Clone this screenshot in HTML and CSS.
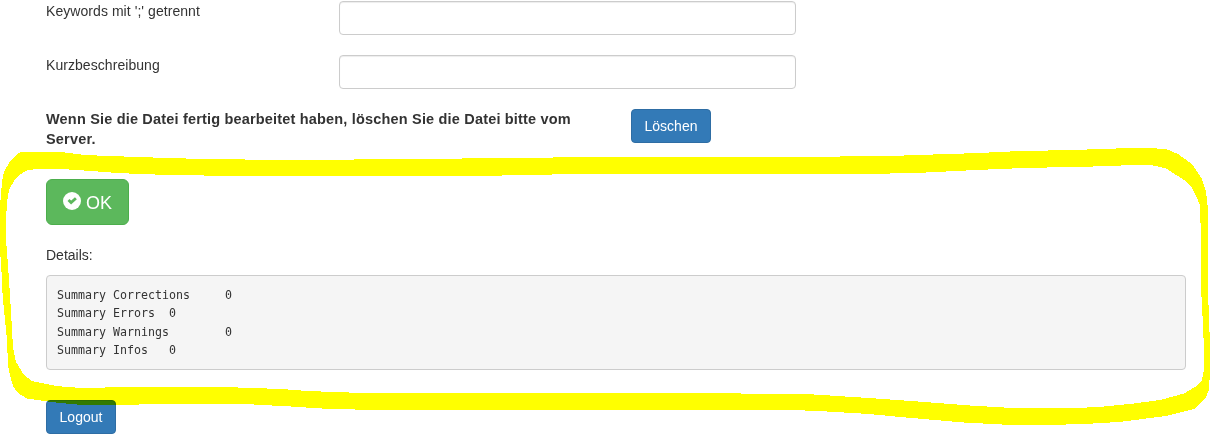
FILE: index.html
```html
<!DOCTYPE html>
<html lang="de">
<head>
<meta charset="utf-8">
<title>Upload</title>
<link rel="stylesheet" href="styles.css">
</head>
<body>
<main class="page">
  <form class="form">
    <div class="row">
      <label class="label" for="keywords">Keywords mit ';' getrennt</label>
      <input class="control" id="keywords" type="text">
    </div>
    <div class="row">
      <label class="label" for="summary">Kurzbeschreibung</label>
      <input class="control" id="summary" type="text">
    </div>
    <div class="row row-delete">
      <strong class="hint">Wenn Sie die Datei fertig bearbeitet haben, löschen Sie die Datei bitte vom Server.</strong>
      <button class="btn btn-delete" type="button">Löschen</button>
    </div>
  </form>
  <button class="btn btn-ok" type="button">
    <svg class="ok-icon" viewBox="0 0 18 18"><circle cx="9" cy="9" r="9" fill="#fff"/><path d="M5.5 8.1 8.1 10.6 12.9 6.2" fill="none" stroke="#5cb85c" stroke-width="2.8"/></svg>
    <span>OK</span>
  </button>
  <p class="details">Details:</p>
  <pre class="report">Summary Corrections	0
Summary Errors	0
Summary Warnings	0
Summary Infos	0</pre>
  <button class="btn btn-logout" type="button">Logout</button>
</main>
<svg class="marker" viewBox="0 0 1210 437" shape-rendering="crispEdges">
  <path fill="#ff0" fill-rule="evenodd" d="M20 152.3H63L74 153.7 85 155 109 156 139 157 166 158 206 159 284 160 383 159.3 512 158 578 157.2 882 156.4 917 155 949 154 979 153 1021 151 1074 150 1100 149 1132 148H1148L1166 149 1178 154 1192 164 1202 179 1206 192 1207.7 206V270L1208.6 309 1209.6 334 1210 370 1209 390 1206 397 1194 409 1166 416 1119 422 1084 424 1048 425H1011L964 422.5 906 417.5 869 414 824 411.3 800 410.3 758 410 597 409.5H534L368 409.8 332 409 311 408 300 407 254 404.5 220 403.5H165L126 405H82L51 402 27 398.5 18 393 13 386 10 375 8 365 7 340 5 320 3 300 2 285 1 258 0 257V206L1 195 2 181 4 172 9 163 15 156Z
  M28 170 19 175 14 181 9 190 7 202 6 220V240L8 265 10 295 12 330 13 348 16 362 24 375 32 381 56 386 81 388 128 387H223L282 389 307 391 334 392 363 393H723L758 394H806L869 398 925 402 970 405.5 1007 407.7H1084L1104 406.5 1134 403.5 1160 400 1184 393.5 1195 387 1202 380 1204 370V350L1203 325 1201 288V240L1200 205 1197 198 1192 188 1184 180 1166 168.5 1152 165.2H1128L1102 166.3 1024 168 976 170 946 171.5 916 173 874 173.8 568 174.2 497 175.6H210L171 175 138 174 111 172.5 84 170.5 62 169H38Z"/>
</svg>
</body>
</html>
```
FILE: styles.css
```css
* { box-sizing: border-box; }

body {
  position: relative;
  height: 437px;
  margin: 0;
  overflow: hidden;
  background: #fff;
  color: #333;
  font: 14px/20px "Liberation Sans", Arial, sans-serif;
}

.page {
  display: flex;
  flex-direction: column;
  align-items: flex-start;
  padding: 1px 24px 0 46px;
}

.form {
  display: flex;
  flex-direction: column;
  gap: 20px;
}

.row {
  display: flex;
  height: 34px;
}

.label {
  width: 293px;
  letter-spacing: .06px;
}

.control {
  width: 457px;
  height: 34px;
  padding: 6px 12px;
  border: 1px solid #ccc;
  border-radius: 4px;
  background: #fff;
  box-shadow: inset 0 1px 1px rgba(0, 0, 0, .075);
  font: inherit;
}

.hint {
  width: 555px;
  margin-right: 30px;
  font-size: 14.5px;
  letter-spacing: .18px;
}

.btn {
  height: 34px;
  padding: 6px 12px;
  border: 1px solid #2e6da4;
  border-radius: 4px;
  background: #337ab7;
  color: #fff;
  font: inherit;
  white-space: nowrap;
}

.btn-delete { width: 80px; }

.btn-ok {
  display: flex;
  align-items: center;
  gap: 5px;
  width: 83px;
  height: 46px;
  margin-top: 36px;
  padding: 10px 16px;
  border-color: #4cae4c;
  border-radius: 6px;
  background: #5cb85c;
  font-size: 18px;
  line-height: 24px;
}

.btn-ok span { padding-top: 1px; }

.ok-icon {
  flex: none;
  width: 18px;
  height: 18px;
  margin-top: -3px;
}

.details { margin: 20px 0 10px; }

.report {
  align-self: stretch;
  height: 95px;
  margin: 0;
  padding: 9.5px 10px;
  border: 1px solid #ccc;
  border-radius: 4px;
  background: #f5f5f5;
  font: 11.63px/18.57px "DejaVu Sans Mono", monospace;
  tab-size: 8;
}

.btn-logout {
  width: 70px;
  margin-top: 30px;
}

/* Hand-drawn highlighter stroke over the result area */
.marker {
  position: absolute;
  top: 0;
  left: 0;
  width: 1210px;
  height: 437px;
  mix-blend-mode: multiply;
  pointer-events: none;
}
```
